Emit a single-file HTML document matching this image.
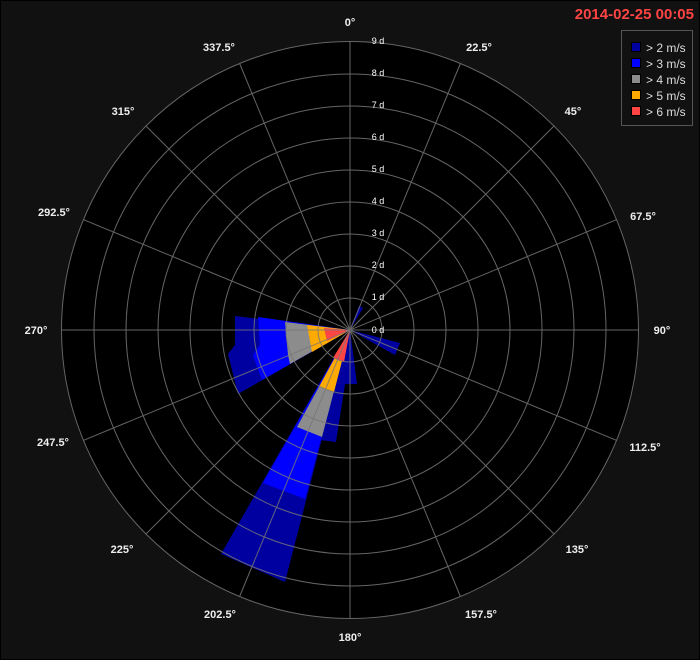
<!DOCTYPE html>
<html><head><meta charset="utf-8"><style>
html,body{margin:0;padding:0;background:#111;}
svg{display:block;}
text{font-family:"Liberation Sans",sans-serif;}
</style></head><body>
<svg width="700" height="660" viewBox="0 0 700 660" xmlns="http://www.w3.org/2000/svg">
<rect x="0" y="0" width="700" height="660" fill="#111"/>
<rect x="0.5" y="0.5" width="699" height="659" fill="none" stroke="#000" stroke-width="1"/>
<circle cx="350" cy="330" r="289" fill="#000"/>
<g>
<polygon points="350,330 235,316 235,345 228,354 238,394" fill="#0000a0"/>
<polygon points="350,330 258,317 260,345 253,355 262,380" fill="#0000ff"/>
<polygon points="350,330 285,322 288,355 290,364" fill="#8c8c8c"/>
<polygon points="350,330 307,325 312,352" fill="#ffaa00"/>
<polygon points="350,330 324,328 327,341" fill="#ff4444"/>

<polygon points="350,330 221,554 285,582" fill="#0000a0"/>
<polygon points="350,330 342,384 357,384" fill="#0000a0"/>
<polygon points="350,330 320,440 336,442 345,384" fill="#0000a0"/>
<polygon points="350,330 263,483 305,499" fill="#0000ff"/>
<polygon points="350,330 297,427 322,437" fill="#8c8c8c"/>
<polygon points="350,330 319,387 334,392" fill="#ffaa00"/>
<polygon points="350,330 333,358 344,362" fill="#ff4444"/>

<polygon points="350,330 400,343 395,355" fill="#0000a0"/>
<polygon points="350,330 359,306 363,308" fill="#0000a0"/>
</g>
<g fill="none" stroke="#777" stroke-width="1" opacity="0.85">
<circle cx="350" cy="330" r="32"/>
<circle cx="350" cy="330" r="64"/>
<circle cx="350" cy="330" r="96"/>
<circle cx="350" cy="330" r="128"/>
<circle cx="350" cy="330" r="160"/>
<circle cx="350" cy="330" r="192"/>
<circle cx="350" cy="330" r="224"/>
<circle cx="350" cy="330" r="256"/>
<circle cx="350" cy="330" r="288.5"/>
<line x1="350" y1="41" x2="350" y2="619"/>
<line x1="61" y1="330" x2="639" y2="330"/>
<line x1="239.4" y1="63" x2="460.6" y2="597"/>
<line x1="460.6" y1="63" x2="239.4" y2="597"/>
<line x1="145.6" y1="125.6" x2="554.4" y2="534.4"/>
<line x1="554.4" y1="125.6" x2="145.6" y2="534.4"/>
<line x1="83" y1="219.4" x2="617" y2="440.6"/>
<line x1="617" y1="219.4" x2="83" y2="440.6"/>
</g>
<g fill="#fff" font-size="9" text-anchor="middle">
<text x="378" y="44">9 d</text>
<text x="378" y="76">8 d</text>
<text x="378" y="108">7 d</text>
<text x="378" y="140">6 d</text>
<text x="378" y="172">5 d</text>
<text x="378" y="204">4 d</text>
<text x="378" y="236">3 d</text>
<text x="378" y="268">2 d</text>
<text x="378" y="300">1 d</text>
<text x="378" y="333">0 d</text>
</g>
<g fill="#eee" font-size="11" font-weight="bold" text-anchor="middle">
<text x="350" y="26">0°</text>
<text x="479" y="51">22.5°</text>
<text x="573" y="115">45°</text>
<text x="643" y="220">67.5°</text>
<text x="662" y="334">90°</text>
<text x="645" y="451">112.5°</text>
<text x="577" y="553">135°</text>
<text x="481" y="618">157.5°</text>
<text x="350" y="641">180°</text>
<text x="220" y="618">202.5°</text>
<text x="122" y="553">225°</text>
<text x="53" y="446">247.5°</text>
<text x="36" y="334">270°</text>
<text x="54" y="216">292.5°</text>
<text x="123" y="115">315°</text>
<text x="219" y="51">337.5°</text>
</g>
<text x="694" y="19" text-anchor="end" fill="#ff4444" font-size="15" font-weight="bold">2014-02-25 00:05</text>
<rect x="621.5" y="30.5" width="71" height="95" fill="#111" stroke="#555"/>
<g stroke="#000" stroke-width="1">
<rect x="631.5" y="42.5" width="9" height="9" fill="#0000a0"/>
<rect x="631.5" y="58.5" width="9" height="9" fill="#0000ff"/>
<rect x="631.5" y="74.5" width="9" height="9" fill="#8c8c8c"/>
<rect x="631.5" y="90.5" width="9" height="9" fill="#ffaa00"/>
<rect x="631.5" y="106.5" width="9" height="9" fill="#ff4444"/>
</g>
<g fill="#ddd" font-size="12">
<text x="646" y="52">&gt; 2 m/s</text>
<text x="646" y="68">&gt; 3 m/s</text>
<text x="646" y="84">&gt; 4 m/s</text>
<text x="646" y="100">&gt; 5 m/s</text>
<text x="646" y="116">&gt; 6 m/s</text>
</g>
</svg>
</body></html>
